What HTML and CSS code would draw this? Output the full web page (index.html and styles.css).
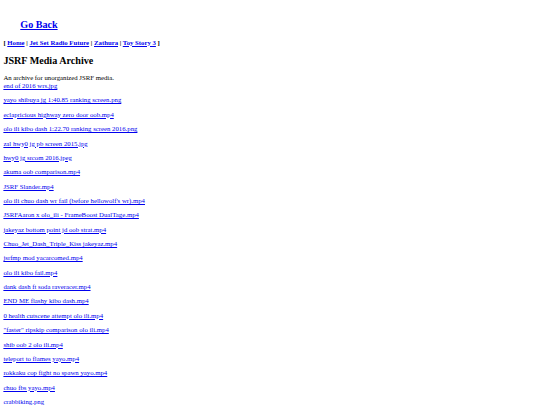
FILE: index.html
```html
<!DOCTYPE html>
<html>
<head>
<meta charset="utf-8">
<title>JSRF Media Archive</title>
<link rel="stylesheet" href="styles.css">
</head>
<body>
<h2 class="back"><a href="#">Go Back</a></h2>
<p class="nav"><b>[ <a href="#">Home</a> | <a href="#">Jet Set Radio Future</a> | <a href="#">Zathura</a> | <a href="#">Toy Story 3</a> ]</b></p>
<h2 class="title">JSRF Media Archive</h2>
<p>An archive for unorganized JSRF media.<br><a href="#">end of 2016 wrs.jpg</a></p>
<p><a href="#">yayo shibuya jg 1:40.85 ranking screen.png</a></p>
<p><a href="#">eclapricious highway zero door oob.mp4</a></p>
<p><a href="#">olo ili kibo dash 1:22.70 ranking screen 2016.png</a></p>
<p><a href="#">zal hwy0 jg pb screen 2015.jpg</a></p>
<p><a href="#">hwy0 jg srcom 2016.jpeg</a></p>
<p><a href="#">akuma oob comparison.mp4</a></p>
<p><a href="#">JSRF Slander.mp4</a></p>
<p><a href="#">olo ili chuo dash wr fail (before hellowolf's wr).mp4</a></p>
<p><a href="#">JSRFAaron x olo_ili - FrameBoost DualTage.mp4</a></p>
<p><a href="#">jakeyaz bottom point jd oob strat.mp4</a></p>
<p><a href="#">Chuo_Jet_Dash_Triple_Kiss jakeyaz.mp4</a></p>
<p><a href="#">jsrfmp mod yacarcomed.mp4</a></p>
<p><a href="#">olo ili kibo fail.mp4</a></p>
<p><a href="#">dank dash ft soda raveracer.mp4</a></p>
<p><a href="#">END ME flashy kibo dash.mp4</a></p>
<p><a href="#">0 health cutscene attempt olo ili.mp4</a></p>
<p><a href="#">"faster" ripskip comparison olo ili.mp4</a></p>
<p><a href="#">shib oob 2 olo ili.mp4</a></p>
<p><a href="#">teleport to flames yayo.mp4</a></p>
<p><a href="#">rokkaku cop fight no spawn yayo.mp4</a></p>
<p><a href="#">chuo fbs yayo.mp4</a></p>
<p><a href="#">crabbiking.png</a></p>
</body>
</html>
```
FILE: styles.css
```css
html {
  background: #ffffff;
}
body {
  margin: 0;
  padding: 3.375px;
  font-family: "Liberation Serif", "Times New Roman", serif;
  font-size: 6.75px;
  line-height: 7.76px;
  color: #000000;
}
a {
  color: #0000ee;
}
p {
  margin: 6.6px 0;
}
h2 {
  font-size: 10.125px;
  line-height: 11.64px;
  font-weight: bold;
  margin: 8.4px 0;
}
.back {
  margin: 15.6px 0 8.2px 16.9px;
}
.nav {
  margin: 0;
}
.title {
  margin: 8.5px 0 7.6px 0;
}
```
